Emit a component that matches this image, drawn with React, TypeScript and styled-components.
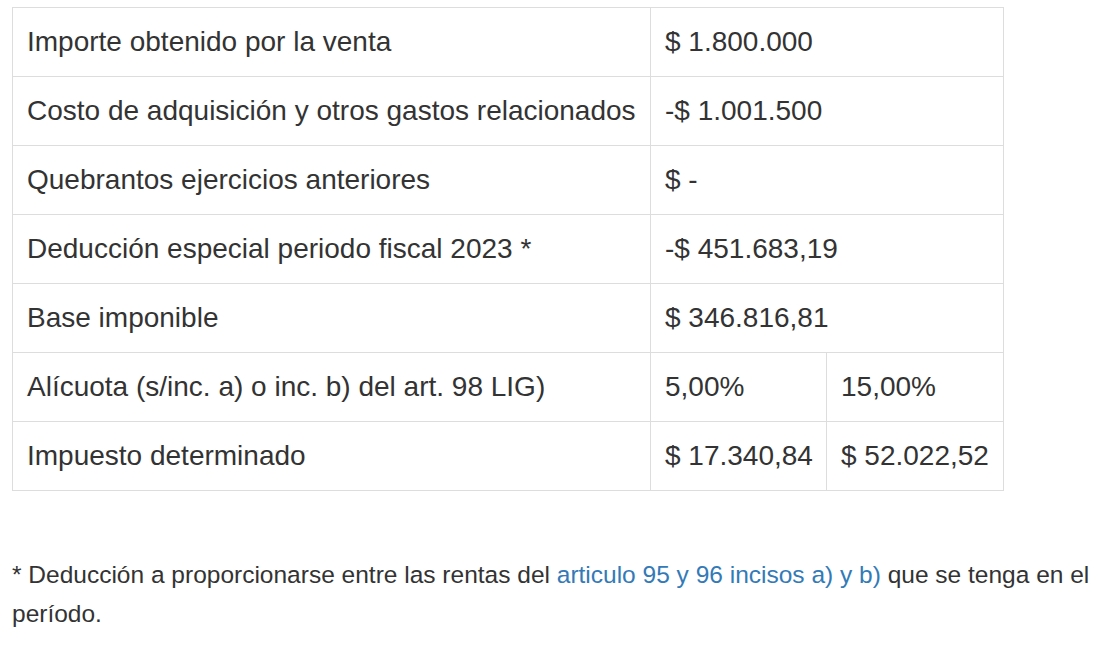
import { FC } from 'react';
import styled, { createGlobalStyle } from 'styled-components';

const GlobalStyle = createGlobalStyle`
  html, body {
    margin: 0;
    padding: 0;
    background: #fff;
  }
  body {
    font-family: 'Liberation Sans', Arial, sans-serif;
    color: #333;
  }
`;

const Page = styled.div`
  padding: 7px 0 0 12px;
`;

const Table = styled.table`
  width: 991px;
  border-collapse: collapse;
  table-layout: fixed;
  font-size: 28px;
`;

const Cell = styled.td`
  border: 1px solid #ddd;
  height: 68px;
  padding: 0 14px;
  vertical-align: middle;
  line-height: 1.2;
  white-space: nowrap;
`;

const Note = styled.p`
  margin: 64px 0 0;
  font-size: 24.5px;
  line-height: 39px;
`;

const Link = styled.a`
  color: #337ab7;
  text-decoration: none;
`;

type Row = { label: string; values: string[] };

const rows: Row[] = [
  { label: 'Importe obtenido por la venta', values: ['$ 1.800.000'] },
  { label: 'Costo de adquisición y otros gastos relacionados', values: ['-$ 1.001.500'] },
  { label: 'Quebrantos ejercicios anteriores', values: ['$ -'] },
  { label: 'Deducción especial periodo fiscal 2023 *', values: ['-$ 451.683,19'] },
  { label: 'Base imponible', values: ['$ 346.816,81'] },
  { label: 'Alícuota (s/inc. a) o inc. b) del art. 98 LIG)', values: ['5,00%', '15,00%'] },
  { label: 'Impuesto determinado', values: ['$ 17.340,84', '$ 52.022,52'] },
];

const App: FC = () => (
  <Page>
    <GlobalStyle />
    <Table>
      <colgroup>
        <col style={{ width: 638 }} />
        <col style={{ width: 176 }} />
        <col style={{ width: 177 }} />
      </colgroup>
      <tbody>
        {rows.map((row) => (
          <tr key={row.label}>
            <Cell>{row.label}</Cell>
            {row.values.length === 1 ? (
              <Cell colSpan={2}>{row.values[0]}</Cell>
            ) : (
              row.values.map((v) => <Cell key={v}>{v}</Cell>)
            )}
          </tr>
        ))}
      </tbody>
    </Table>
    <Note>
      * Deducción a proporcionarse entre las rentas del{' '}
      <Link href="#">articulo 95 y 96 incisos a) y b)</Link> que se tenga en el
      período.
    </Note>
  </Page>
);

export default App;
